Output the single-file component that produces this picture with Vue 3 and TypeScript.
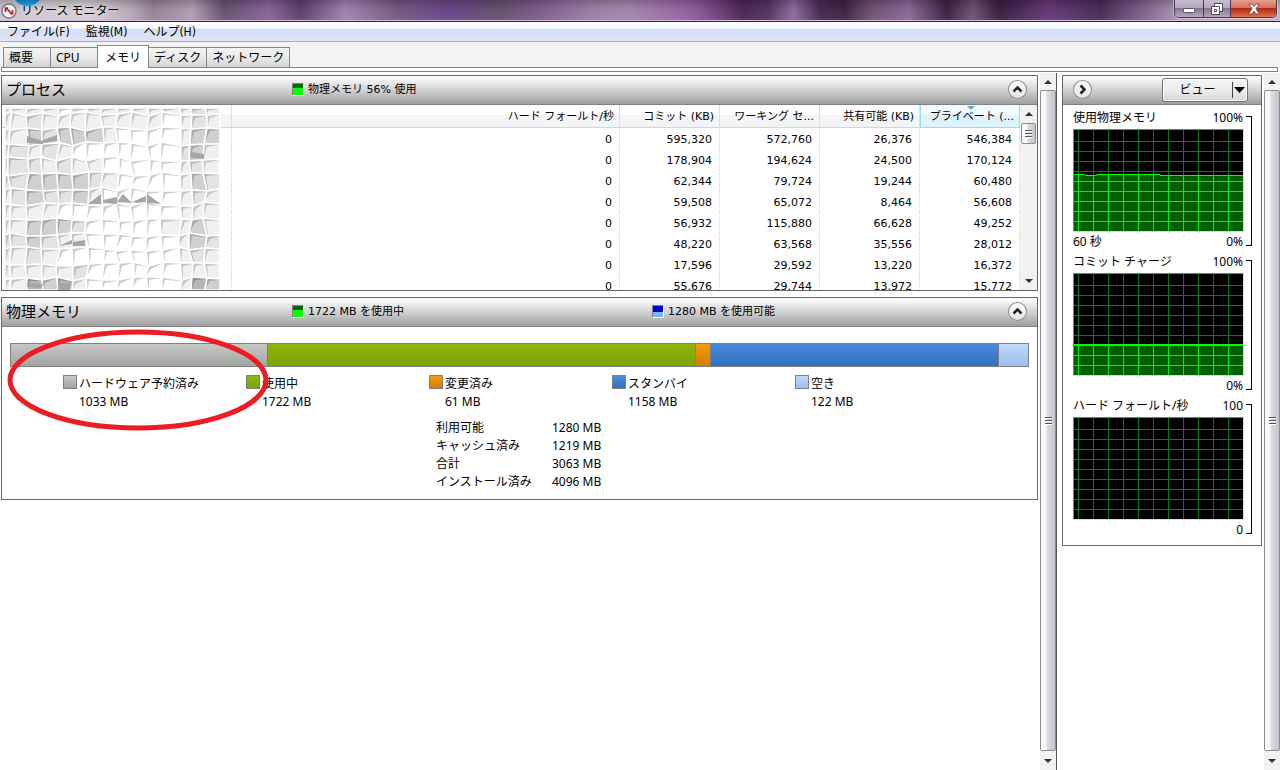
<script setup lang="ts">
interface Segment { name: string; mb: number; top: string; bottom: string }
interface Chart { title: string; max: string; min: string; span: string; line: string; level: number }

const menus = ['ファイル(F)', '監視(M)', 'ヘルプ(H)']
const tabs = [
  { name: '概要', size: 'short' },
  { name: 'CPU', size: 'short' },
  { name: 'メモリ', size: 'active' },
  { name: 'ディスク', size: '' },
  { name: 'ネットワーク', size: '' },
]

const columns = ['ハード フォールト/秒', 'コミット (KB)', 'ワーキング セ...', '共有可能 (KB)', 'プライベート (...']
const rows = [
  ['0', '595,320', '572,760', '26,376', '546,384'],
  ['0', '178,904', '194,624', '24,500', '170,124'],
  ['0', '62,344', '79,724', '19,244', '60,480'],
  ['0', '59,508', '65,072', '8,464', '56,608'],
  ['0', '56,932', '115,880', '66,628', '49,252'],
  ['0', '48,220', '63,568', '35,556', '28,012'],
  ['0', '17,596', '29,592', '13,220', '16,372'],
  ['0', '55,676', '29,744', '13,972', '15,772'],
]

const segments: Segment[] = [
  { name: 'ハードウェア予約済み', mb: 1033, top: '#c6c8c6', bottom: '#a2a4a2' },
  { name: '使用中', mb: 1722, top: '#8bb40c', bottom: '#7ba400' },
  { name: '変更済み', mb: 61, top: '#f99a0e', bottom: '#d47c00' },
  { name: 'スタンバイ', mb: 1158, top: '#4b8bdc', bottom: '#2f70c4' },
  { name: '空き', mb: 122, top: '#bdd9fb', bottom: '#9dbfec' },
]
const totals = [
  ['利用可能', '1280 MB'],
  ['キャッシュ済み', '1219 MB'],
  ['合計', '3063 MB'],
  ['インストール済み', '4096 MB'],
]

const charts: Chart[] = [
  { title: '使用物理メモリ', max: '100%', min: '0%', span: '60 秒', line: '1,45.5 12,45.5 12,46.5 24,46.5 24,45.5 87,45.5 87,46.5 170,46.5', level: 46 },
  { title: 'コミット チャージ', max: '100%', min: '0%', span: '', line: '1,71.5 170,71.5', level: 71 },
  { title: 'ハード フォールト/秒', max: '100', min: '0', span: '', line: '', level: 102 },
]
const gridX = Array.from({ length: 11 }, (_, i) => 5 + i * 15)
const gridY = Array.from({ length: 9 }, (_, i) => 12 + i * 10)

/* Shattered-tile mask over the process names */
const tileX = [0, 5, 22, 38, 53, 67, 82, 97, 112, 127, 143, 157, 175, 186, 200, 215]
const tileY = [0, 6, 21, 36, 51, 66, 81, 96, 112, 127, 141, 156, 171, 182]
const tileLevels = [
  '111101111111121',
  '112111111110121',
  '113233310000133',
  '121210000000231',
  '122121100000121',
  '223333210000132',
  '123223100000121',
  '111100000000111',
  '113332000001131',
  '223211000000132',
  '112100000000121',
  '111112000000111',
  '114341000000143',
]
const shades = ['#ffffff', '#f0f0f1', '#e2e3e4', '#cfd0d1', '#b4b6b7']
const edges = ['#cccece', '#c4c6c7', '#b8babb', '#a6a8a9', '#8e9091']

function jitter(r: number, c: number, k: number): number {
  if (c === 0 || c === 15 || r === 0 || r === 13) return 0
  const v = Math.sin(r * 12.9 + c * 78.2 + k * 37.7) * 43758.5
  return Math.round((v - Math.floor(v)) * 5 - 2.5)
}
function corner(r: number, c: number): [number, number] {
  return [tileX[c] + jitter(r, c, 1), tileY[r] + jitter(r, c, 2)]
}
const tiles = tileLevels.flatMap((line, r) =>
  [...line].map((ch, c) => {
    const level = Number(ch)
    const a = corner(r, c)
    const b = corner(r, c + 1)
    const d = corner(r + 1, c + 1)
    const e = corner(r + 1, c)
    return {
      key: `${r}-${c}`,
      body: `${a} ${b} ${d} ${e}`,
      edge: `${a} ${b} ${b[0] - 1},${b[1] + 1} ${a[0] + 3},${a[1] + 3} ${e[0] + 1},${e[1] - 2} ${e}`,
      fill: shades[level],
      shade: edges[level],
    }
  }),
)
const wedges = [
  '22,28 38,33 38,36 22,35', '38,32 52,27 52,33 38,35', '83,96 96,86 96,96', '98,92 112,89 112,96 98,95',
  '112,94 118,86 127,95', '127,94 141,88 141,94 132,95', '142,86 156,96 142,95', '54,138 67,132 67,136 54,138',
  '68,134 80,132 80,138 68,138', '186,44 199,46 199,51 186,50', '22,175 38,176 36,180 22,179', '53,175 65,175 65,182 53,182',
]
</script>

<template>
  <div class="window">
    <header class="titlebar">
      <span class="orb"></span>
      <svg class="app-icon" width="16" height="16" viewBox="0 0 16 16" aria-hidden="true">
        <circle cx="8" cy="8" r="7" fill="#f4f4f4" stroke="#77777c" stroke-width="1.4" />
        <path d="M4.500 9V5h2.500M5 4.500l6 7M11.500 7v4.500" fill="none" stroke="#c8141c" stroke-width="1.7" />
      </svg>
      <h1>リソース モニター</h1>
      <div class="controls">
        <button class="ctl min" aria-label="最小化">
          <svg width="14" height="12" viewBox="0 0 14 12"><rect x="1.5" y="6.5" width="11" height="4" rx="1" fill="#fff" stroke="#555566" /></svg>
        </button>
        <button class="ctl max" aria-label="元に戻す">
          <svg width="14" height="14" viewBox="0 0 14 14"><path d="M4.500 1.500h8v8h-3v3h-8v-8h3z" fill="#fff" stroke="#4e4a5a" /><path d="M4.500 4.500h5v5M4.500 7.500h2v2h-2z" fill="none" stroke="#4e4a5a" /></svg>
        </button>
        <button class="ctl close" aria-label="閉じる">
          <svg width="14" height="12" viewBox="0 0 14 12"><path d="M2 1h3l2 2.500L9 1h3L9 5.800 12.300 11H9L7 8l-2 3H1.700L5 5.800z" fill="#fff" stroke="#6b4048" stroke-width=".8" /></svg>
        </button>
      </div>
    </header>

    <nav class="menu">
      <button v-for="m in menus" :key="m">{{ m }}</button>
    </nav>

    <div class="tabs" role="tablist">
      <button v-for="t in tabs" :key="t.name" role="tab" :class="['tab', t.size]" :aria-selected="t.size === 'active'">{{ t.name }}</button>
    </div>
    <div class="tab-edge"></div>

    <div class="workspace">
      <main class="main">
        <section class="panel">
          <div class="panel-head">
            <h2>プロセス</h2>
            <span class="metric"><i class="chip green"></i>物理メモリ 56% 使用</span>
            <button class="round" aria-label="折りたたむ">
              <svg width="19" height="19" viewBox="0 0 19 19"><path d="M5.500 11.500l4-4 4 4" /></svg>
            </button>
          </div>
          <div class="process">
            <div class="table-clip">
              <table>
                <thead>
                  <tr>
                    <th class="name-col" aria-label="イメージ"></th>
                    <th v-for="(c, i) in columns" :key="c" :class="{ wide: i === 0, sorted: i === 4 }">{{ c }}</th>
                  </tr>
                </thead>
                <tbody>
                  <tr v-for="(r, i) in rows" :key="i">
                    <td></td>
                    <td v-for="(v, j) in r" :key="j">{{ v }}</td>
                  </tr>
                </tbody>
              </table>
              <svg class="mask" width="216" height="182" viewBox="0 0 216 182" aria-hidden="true">
                <rect width="216" height="182" fill="#fff" />
                <g v-for="t in tiles" :key="t.key">
                  <polygon :points="t.body" :fill="t.fill" />
                  <polygon :points="t.edge" :fill="t.shade" />
                  <polygon :points="t.body" fill="none" stroke="#fff" stroke-width="1.500" />
                </g>
                <polygon v-for="w in wedges" :key="w" :points="w" fill="#a4a6a7" />
              </svg>
            </div>
            <div class="scroll inner">
              <span class="arrow up"></span>
              <span class="thumb"><i></i><i></i><i></i></span>
              <span class="arrow down"></span>
            </div>
          </div>
        </section>

        <section class="panel memory">
          <div class="panel-head">
            <h2>物理メモリ</h2>
            <span class="metric"><i class="chip green"></i>1722 MB を使用中</span>
            <span class="metric"><i class="chip blue"></i>1280 MB を使用可能</span>
            <button class="round" aria-label="折りたたむ">
              <svg width="19" height="19" viewBox="0 0 19 19"><path d="M5.500 11.500l4-4 4 4" /></svg>
            </button>
          </div>
          <div class="bar">
            <span v-for="s in segments" :key="s.name" :style="{ flexGrow: s.mb, background: `linear-gradient(${s.top}, ${s.bottom})` }"></span>
          </div>
          <ul class="legend">
            <li v-for="s in segments" :key="s.name">
              <i :style="{ background: `linear-gradient(${s.top}, ${s.bottom})` }"></i>
              <div>{{ s.name }}<br />{{ s.mb }} MB</div>
            </li>
          </ul>
          <table class="totals">
            <tbody>
              <tr v-for="t in totals" :key="t[0]"><th scope="row">{{ t[0] }}</th><td>{{ t[1] }}</td></tr>
            </tbody>
          </table>
          <svg class="marker" width="264" height="104" viewBox="0 0 264 104" aria-hidden="true">
            <ellipse cx="132" cy="52" rx="128" ry="48" fill="none" stroke="#ed1c24" stroke-width="5" />
          </svg>
        </section>
      </main>

      <div class="scroll">
        <span class="arrow up"></span>
        <span class="thumb"><i></i><i></i><i></i></span>
        <span class="arrow down"></span>
      </div>

      <aside class="side">
        <section class="panel">
          <div class="panel-head">
            <button class="round" aria-label="グラフを隠す">
              <svg width="19" height="19" viewBox="0 0 19 19"><path d="M7.500 5.500l4 4-4 4" /></svg>
            </button>
            <div class="view">
              <button>ビュー</button>
              <button class="drop" aria-label="ビューの選択"><svg width="11" height="6" viewBox="0 0 11 6"><path d="M0 0h11L5.500 6z" /></svg></button>
            </div>
          </div>
          <div v-for="c in charts" :key="c.title" class="chart">
            <div class="plot">
              <div class="caption"><span>{{ c.title }}</span><span>{{ c.max }}</span></div>
              <svg width="171" height="103" viewBox="0 0 171 103" aria-hidden="true">
                <rect width="171" height="103" fill="#dcdcdc" />
                <path d="M0 0h170v1H1v101H0z" fill="#808080" />
                <rect x="1" y="1" width="169" height="101" fill="#000" />
                <rect v-for="x in gridX" :key="'v' + x" :x="x" y="1" width="1" height="101" fill="#008018" />
                <rect v-for="y in gridY" :key="'h' + y" x="1" :y="y" width="169" height="1" fill="#008018" />
                <g v-if="c.line">
                  <rect x="1" :y="c.level" width="169" :height="102 - c.level" fill="#006000" />
                  <rect v-for="x in gridX" :key="'f' + x" :x="x" :y="c.level" width="1" :height="102 - c.level" fill="#00f01c" />
                  <template v-for="y in gridY" :key="'g' + y">
                    <rect v-if="y > c.level" x="1" :y="y" width="169" height="1" fill="#00f01c" />
                  </template>
                  <polyline :points="c.line" fill="none" stroke="#00ff00" />
                </g>
              </svg>
              <div class="caption"><span>{{ c.span }}</span><span>{{ c.min }}</span></div>
            </div>
            <div class="bracket"></div>
          </div>
        </section>
      </aside>

      <div class="scroll">
        <span class="arrow up"></span>
        <span class="thumb"><i></i><i></i><i></i></span>
        <span class="arrow down"></span>
      </div>
    </div>
  </div>
</template>

<style>
body { margin: 0; background: #fff; }
</style>

<style scoped>
.window { display: flex; flex-direction: column; height: 100vh; min-height: 560px; overflow: hidden; background: #fff; color: #000; font: 12px/18px "Noto Sans", "Noto Sans CJK JP", sans-serif; }
* { box-sizing: border-box; }
h1, h2, ul { margin: 0; padding: 0; font-weight: 400; }
button { margin: 0; padding: 0; border: 0; background: none; color: inherit; font: inherit; }

.titlebar { position: relative; flex: none; display: flex; align-items: flex-start; height: 22px; padding: 0 3px 0 1px; border-bottom: 1px solid #2c2430; overflow: hidden; box-shadow: inset 0 -1px #d8bfe0;
  background: linear-gradient(#0003, #fff0 45%, #fff1), linear-gradient(90deg, #cbc4d0 0%, #d2cbd3 7%, #b9acba 10%, #968296 12%, #b09cb0 15%, #66506e 17.5%, #8a6297 21%, #5d416b 23.5%, #a082ad 27%, #77587f 31%, #6a458a 35%, #66506c 39%, #7d5a89 42%, #9b7ca3 46%, #a386ac 49%, #935da0 54%, #4c2757 58%, #55305f 60%, #9069a0 62%, #482c50 64%, #402344 66%, #705070 68%, #8b6794 71%, #3d2244 74%, #705275 76%, #38203f 78%, #653978 82%, #492d55 86%, #7b5c86 89%, #aa94b0 92%, #c0adc3 100%); }
.orb { position: absolute; left: 13px; top: -20px; width: 29px; height: 26px; border-radius: 50%; background: linear-gradient(#2060a0 70%, #00a8e0); }
.app-icon { flex: none; margin: 3px 0 0; }
h1 { margin: 2px auto 0 4px; font-size: 12px; line-height: 18px; text-shadow: 0 0 5px #fff; }
.controls { display: flex; height: 18px; border: 1px solid #453a4c; border-top: 0; border-radius: 0 0 5px 5px; overflow: hidden; box-shadow: 0 0 0 1px #ffffff66; }
.ctl { display: flex; align-items: center; justify-content: center; width: 28px; background: linear-gradient(#c8bcd0, #b5a7bd 45%, #85758e 50%, #b7a8bf); }
.ctl + .ctl { border-left: 1px solid #453a4c; }
.ctl.min { align-items: flex-end; padding-bottom: 3px; }
.ctl.max { width: 27px; }
.ctl.close { width: 46px; background: linear-gradient(#e5a090, #d4705a 45%, #b02a14 50%, #e07050); }

.menu { flex: none; display: flex; gap: 16px; height: 20px; padding: 0 7px; border-bottom: 1px solid #a9aec0; background: linear-gradient(#fff, #f5f8fd 30%, #d5def4 40%, #dfe5f7); font-family: "DejaVu Sans Condensed", "Noto Sans CJK JP", sans-serif; line-height: 20px; }
.tabs { flex: none; display: flex; align-items: flex-end; height: 25px; padding-left: 3px; background: #f3f3f3; }
.tab { height: 20px; padding: 0 5px; margin-right: -1px; border: 1px solid #85878f; border-bottom: 0; background: linear-gradient(#f4f4f4, #e9e9e9 50%, #d3d4d4); text-align: left; line-height: 19px; }
.tab.short { width: 48px; }
.tab.active { width: 52px; height: 23px; margin-bottom: -1px; z-index: 1; background: #fff; line-height: 21px; text-align: center; padding: 0; }
.tab-edge { flex: none; height: 5px; margin: 0 2px 0 1px; border: 1px solid #7f8182; background: #fff; }

.workspace { flex: 1; display: flex; min-height: 0; padding-top: 1px; }
.main { flex: 1; min-width: 0; padding: 2px 2px 0 1px; }
.panel { position: relative; border: 1px solid #62686a; background: #fff; }
.memory { margin-top: 6px; }
.panel-head { display: flex; align-items: center; height: 29px; padding: 0 10px 2px 4px; border-bottom: 1px solid #808080; background: linear-gradient(#fff, #f2f2f2 15%, #cdcdcd 55%, #9d9e9d); font-size: 11px; }
h2 { flex: none; width: 286px; font-size: 15px; line-height: 24px; }
.metric { flex: none; display: flex; align-items: center; gap: 4px; width: 360px; padding-top: 2px; line-height: 20px; font-family: "DejaVu Sans", "Noto Sans CJK JP", sans-serif; }
.metric + .metric { width: auto; }
.chip { width: 12px; height: 13px; margin-bottom: 2px; border: 1px solid #808080; border-right-color: #fff; border-bottom-color: #fff; }
.green { background: linear-gradient(#006800 35%, #00ff00 35%); }
.blue { background: linear-gradient(#0000d8 55%, #70b8ff 55%); }
.round { flex: none; width: 19px; height: 19px; margin-left: auto; border-radius: 50%; background: linear-gradient(#fff, #e2e2e2); box-shadow: inset 0 0 0 1px #888; }
.round svg { display: block; fill: none; stroke: #222; stroke-width: 2.5; }

.process { display: flex; height: 185px; }
.table-clip { position: relative; flex: 1; min-width: 0; overflow: hidden; }
.table-clip table { width: 100%; border-collapse: separate; border-spacing: 0; table-layout: fixed; font: 11px/18px "DejaVu Sans", "Noto Sans CJK JP", sans-serif; }
.table-clip th { width: 100px; height: 23px; padding: 2px 5px 0 0; border-right: 1px solid #dfe0e4; border-bottom: 1px solid #d5d5d5; background: linear-gradient(#fff 45%, #f3f4f6 45%); font-weight: 400; text-align: right; white-space: nowrap; }
.table-clip th.name-col { width: 230px; }
.table-clip th.wide { width: auto; }
.table-clip th.sorted { position: relative; border-color: #96d9f9; background: linear-gradient(#f2fbff 45%, #dff3fd 45%); box-shadow: inset 1px 0 #96d9f9; }
.sorted::before { content: ""; position: absolute; top: 1px; left: 47px; border: 4px solid transparent; border-top-color: #6aa5cc; border-bottom: 0; }
.table-clip td { height: 21px; padding: 3px 7px 0 0; border-right: 1px dotted #c5d9ec; text-align: right; }
.mask { position: absolute; left: 3px; top: 3px; }

.scroll { flex: none; display: flex; flex-direction: column; width: 16px; background: #f2f1f2; }
.scroll + .side { border-left: 1px solid #555; }
.arrow { flex: none; display: flex; align-items: center; justify-content: center; height: 17px; }
.arrow.down { height: 19px; }
.arrow::after { content: ""; border: 4px solid transparent; }
.up::after { border-top: 0; border-bottom-color: #333; }
.down::after { border-bottom: 0; border-top-color: #333; }
.thumb { flex: 1; display: flex; flex-direction: column; align-items: center; justify-content: center; gap: 1px; border: 1px solid #8e8b92; border-radius: 2px; background: linear-gradient(90deg, #faf9fb 35%, #dddbe2 45%, #c6c4ca); }
.thumb i { width: 7px; height: 2px; background: linear-gradient(#555 50%, #fff 50%); }
.inner { width: 17px; padding: 0 1px; }
.inner .arrow { height: 18px; }
.inner .thumb { flex: none; height: 21px; }
.inner .down { margin-top: auto; }

.bar { display: flex; height: 24px; margin: 16px 8px 0; border: 1px solid #7d7f80; }
.bar span { flex: 1 1 0; }
.bar span + span { box-shadow: inset 1px 0 #808080; }
.legend { display: grid; grid-template-columns: repeat(5, 183px); justify-content: center; padding: 8px 0 0 2px; list-style: none; }
.legend li { display: flex; gap: 2px; }
.legend i { flex: none; width: 14px; height: 14px; border: 1px solid #808080; }
.totals { margin: 8px auto 8px; border-spacing: 0; }
.totals th { width: 116px; padding: 0; font-weight: 400; text-align: left; }
.totals td { width: 51px; padding: 0; white-space: nowrap; }
.marker { position: absolute; left: 4px; top: 30px; }

.side { flex: none; width: 208px; padding: 2px 2px 0 5px; }
.side .panel { padding-bottom: 8px; }
.side .panel-head { margin-bottom: 4px; padding: 0 13px 1px 10px; }
.side .round { margin: 0; }
.view { display: flex; width: 86px; height: 24px; margin-left: auto; border: 1px solid #707070; border-radius: 3px; background: linear-gradient(#f5f5f5, #ececec 50%, #d7d7d7); box-shadow: inset 0 0 0 1px #fff; font-size: 12px; }
.view button { flex: 1; }
.view .drop { flex: none; width: 15px; margin: 3px 0; padding: 0 1px; border-left: 1px solid #444; }
.drop svg { display: block; }
.chart { display: flex; height: 144px; padding-left: 10px; }
.side .chart:last-child { height: 140px; }
.plot { width: 171px; }
.plot svg { display: block; margin: 2px 0 1px; }
.caption { display: flex; justify-content: space-between; height: 18px; padding-right: 1px; }
.bracket { width: 6px; height: 130px; margin: 7px 0 0 2px; border: 1px solid #000; border-left: 0; }
</style>
